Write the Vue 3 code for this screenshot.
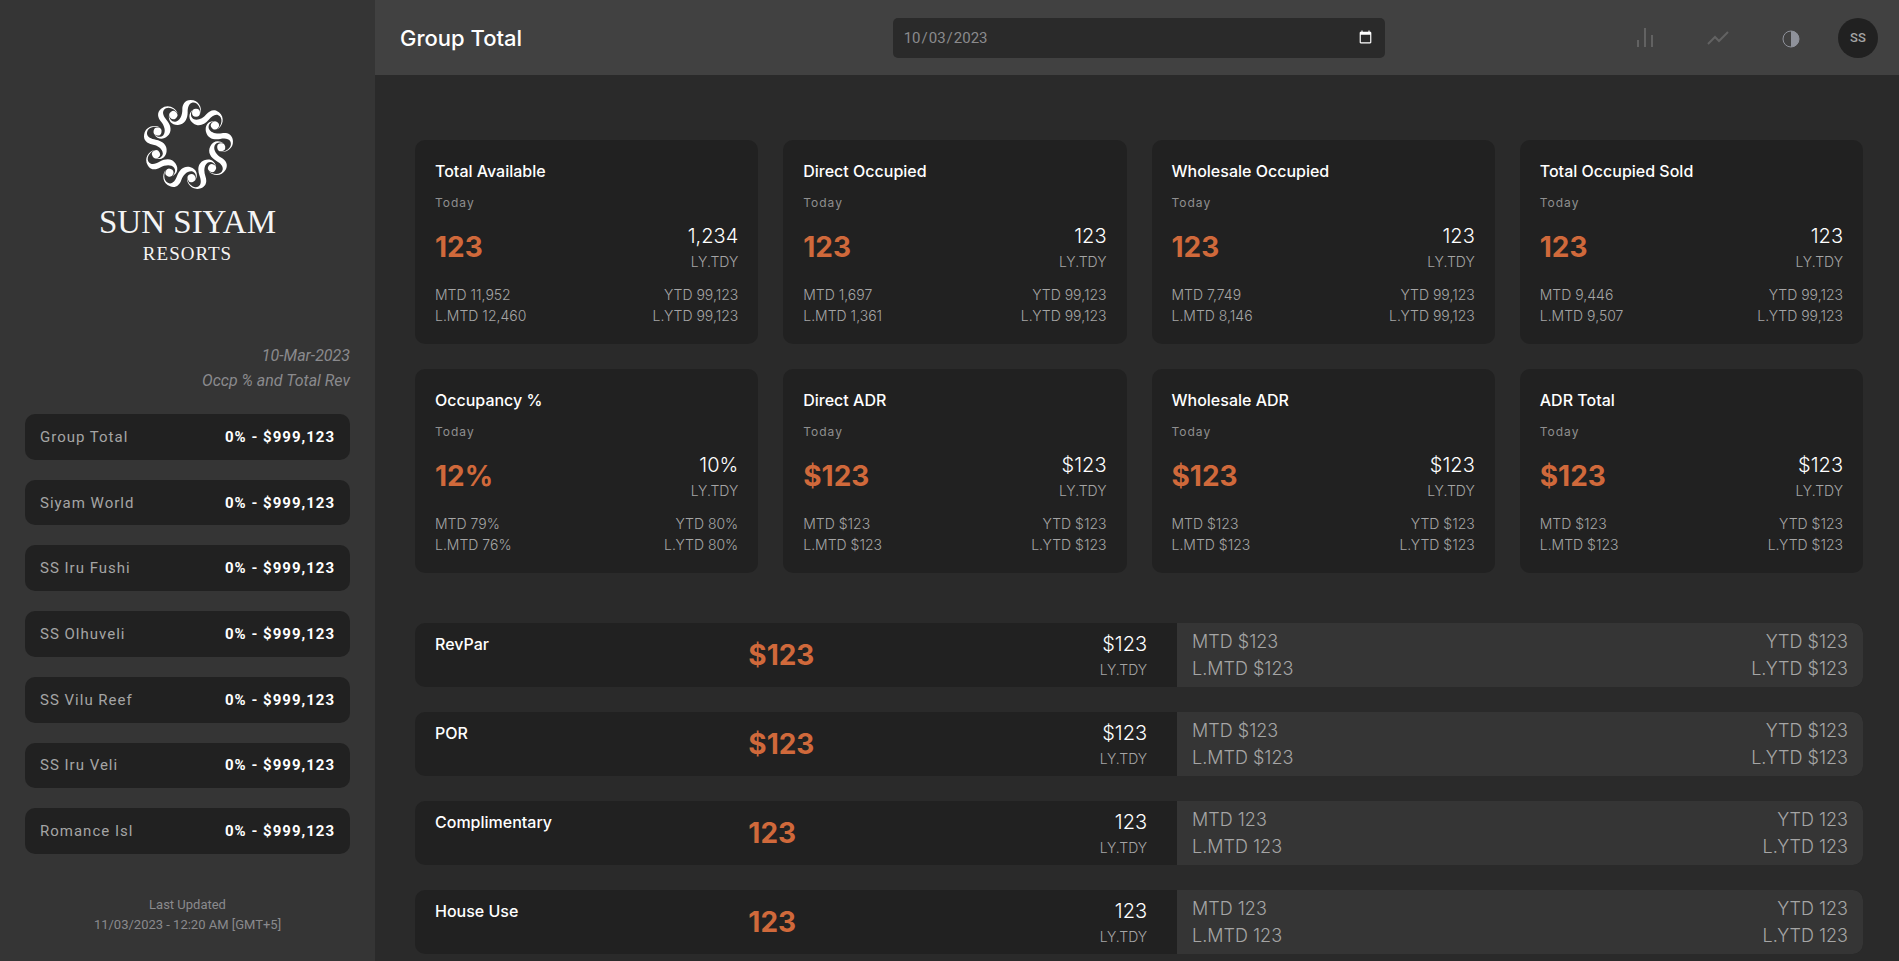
<script setup>
import { ref } from 'vue'

const reportDate = ref('2023-10-03')
const selected = ref('Group Total')

const resorts = [
  'Group Total',
  'Siyam World',
  'SS Iru Fushi',
  'SS Olhuveli',
  'SS Vilu Reef',
  'SS Iru Veli',
  'Romance Isl'
]

const cards = [
  { title: 'Total Available', today: '123', lastYear: '1,234', mtd: '11,952', lmtd: '12,460', ytd: '99,123', lytd: '99,123' },
  { title: 'Direct Occupied', today: '123', lastYear: '123', mtd: '1,697', lmtd: '1,361', ytd: '99,123', lytd: '99,123' },
  { title: 'Wholesale Occupied', today: '123', lastYear: '123', mtd: '7,749', lmtd: '8,146', ytd: '99,123', lytd: '99,123' },
  { title: 'Total Occupied Sold', today: '123', lastYear: '123', mtd: '9,446', lmtd: '9,507', ytd: '99,123', lytd: '99,123' },
  { title: 'Occupancy %', today: '12%', lastYear: '10%', mtd: '79%', lmtd: '76%', ytd: '80%', lytd: '80%' },
  { title: 'Direct ADR', today: '$123', lastYear: '$123', mtd: '$123', lmtd: '$123', ytd: '$123', lytd: '$123' },
  { title: 'Wholesale ADR', today: '$123', lastYear: '$123', mtd: '$123', lmtd: '$123', ytd: '$123', lytd: '$123' },
  { title: 'ADR Total', today: '$123', lastYear: '$123', mtd: '$123', lmtd: '$123', ytd: '$123', lytd: '$123' }
]

const strips = [
  { title: 'RevPar', value: '$123' },
  { title: 'POR', value: '$123' },
  { title: 'Complimentary', value: '123' },
  { title: 'House Use', value: '123' }
]
</script>

<template>
  <div class="layout">
    <aside class="sidebar">
      <div class="logo">
        <svg class="logo-mark" viewBox="-135 -135 270 270" aria-hidden="true">
          <g v-for="n in 9" :key="n" :transform="`rotate(${(n - 1) * 40})`">
            <path d="M37 -92C44 -112 32 -135 8 -135C-10 -135 -17 -121 -17 -106C-17 -90 -24 -73 -38 -70C-49 -69 -56 -78 -57 -90C-60 -72 -48 -59 -30 -60C-10 -61 -1 -78 -1 -98C-1 -112 2 -124 12 -127C28 -131 40 -112 37 -92Z" />
            <circle cx="24" cy="-97" r="12" />
          </g>
        </svg>
        <div class="logo-name">SUN SIYAM</div>
        <div class="logo-sub">RESORTS</div>
      </div>

      <div class="caption">
        10-Mar-2023<br />
        Occp % and Total Rev
      </div>

      <nav class="resorts">
        <button
            v-for="resort in resorts"
            :key="resort"
            type="button"
            class="resort"
            @click="selected = resort"
        >
          <span>{{ resort }}</span>
          <strong>0% - $999,123</strong>
        </button>
      </nav>

      <div class="updated">
        Last Updated<br />
        11/03/2023 - 12:20 AM [GMT+5]
      </div>
    </aside>

    <div class="page">
      <header class="topbar">
        <h1>{{ selected }}</h1>
        <input v-model="reportDate" class="date" type="date" aria-label="Report date" />
        <div class="actions">
          <button type="button" class="icon-btn" aria-label="Bar chart">
            <svg class="dim" width="24" height="24" viewBox="0 0 24 24">
              <path d="M5 14v7M12 2v19M19 9v12" />
            </svg>
          </button>
          <button type="button" class="icon-btn" aria-label="Trend">
            <svg class="dim" width="24" height="24" viewBox="0 0 24 24">
              <path d="M2 18l7-7 4 4 9-9" />
            </svg>
          </button>
          <button type="button" class="icon-btn" aria-label="Theme">
            <svg width="24" height="24" viewBox="0 0 24 24">
              <circle class="ring" cx="12" cy="13" r="8" />
              <path class="half" d="M12 5a8 8 0 0 1 0 16z" />
            </svg>
          </button>
          <button type="button" class="avatar">SS</button>
        </div>
      </header>

      <main class="content">
        <section class="cards">
          <article v-for="card in cards" :key="card.title" class="card">
            <h2>{{ card.title }}</h2>
            <div class="today">Today</div>
            <div class="figures">
              <div class="value">{{ card.today }}</div>
              <div class="last-year">
                <div class="amount">{{ card.lastYear }}</div>
                <div class="label">LY.TDY</div>
              </div>
            </div>
            <div class="totals">
              <div>MTD {{ card.mtd }}<br />L.MTD {{ card.lmtd }}</div>
              <div class="right">YTD {{ card.ytd }}<br />L.YTD {{ card.lytd }}</div>
            </div>
          </article>
        </section>

        <section class="strips">
          <article v-for="strip in strips" :key="strip.title" class="strip">
            <div class="strip-main">
              <h2>{{ strip.title }}</h2>
              <div class="value">{{ strip.value }}</div>
              <div class="last-year">
                <div class="amount">{{ strip.value }}</div>
                <div class="label">LY.TDY</div>
              </div>
            </div>
            <div class="strip-totals">
              <div>MTD {{ strip.value }}<br />L.MTD {{ strip.value }}</div>
              <div class="right">YTD {{ strip.value }}<br />L.YTD {{ strip.value }}</div>
            </div>
          </article>
        </section>
      </main>
    </div>
  </div>
</template>

<style>
body {
  background: #2a2a2a;
}
</style>

<style scoped>
.layout {
  display: flex;
  min-height: 100vh;
  font-family: Inter, sans-serif;
  color: #fff;
}

.layout * {
  box-sizing: border-box;
}

button {
  border: none;
  padding: 0;
  background: none;
  font-family: Roboto, sans-serif;
  cursor: pointer;
}

.sidebar {
  width: 375px;
  flex-shrink: 0;
  display: flex;
  flex-direction: column;
  padding: 100px 25px 26px;
  background: #353535;
  font-family: Roboto, sans-serif;
}

.logo {
  text-align: center;
  font-family: "Liberation Serif", serif;
  color: #f4f4f4;
}

.logo-mark {
  display: block;
  width: 90px;
  height: 90px;
  margin: 0 auto 14px;
  fill: #fff;
}

.logo-name {
  font-size: 33px;
  line-height: 36px;
}

.logo-sub {
  margin-top: 2px;
  font-size: 19px;
  line-height: 24px;
  letter-spacing: 1px;
}

.caption {
  margin: 77px 0 21px;
  text-align: right;
  font-size: 16px;
  font-style: italic;
  line-height: 25px;
  color: #8a8a8d;
}

.resorts {
  flex: 1;
  display: flex;
  flex-direction: column;
  gap: 20px;
}

.resort {
  flex: 1;
  display: flex;
  align-items: center;
  justify-content: space-between;
  min-height: 44px;
  padding: 0 15px;
  border-radius: 10px;
  background: #212121;
  font-size: 15px;
  letter-spacing: 1px;
  color: #a5a5a5;
}

.resort strong {
  font-weight: 700;
  color: #fff;
}

.updated {
  margin-top: 41px;
  text-align: center;
  font-size: 13px;
  line-height: 20px;
  color: #8a8a8d;
}

.page {
  flex: 1;
  min-width: 0;
}

.topbar {
  display: grid;
  grid-template-columns: repeat(3, 1fr);
  align-items: center;
  height: 75px;
  padding: 0 21px 0 25px;
  background: #414141;
}

h1 {
  margin: 0;
  font-size: 22px;
  font-weight: 500;
}

.date {
  width: 100%;
  height: 40px;
  padding: 0 10px;
  border: none;
  border-radius: 5px;
  background: #2a2a2a;
  font-family: Roboto, sans-serif;
  font-size: 15px;
  color: #8a8a8d;
  color-scheme: dark;
}

.actions {
  display: flex;
  align-items: center;
  justify-content: flex-end;
  gap: 49px;
}

.icon-btn {
  width: 24px;
  height: 24px;
}

.icon-btn svg {
  display: block;
  fill: none;
}

.dim {
  stroke: #626262;
  stroke-width: 2;
}

.ring {
  stroke: #8f929b;
  stroke-width: 1;
}

.icon-btn .half {
  fill: #8f929b;
}

.avatar {
  width: 40px;
  height: 40px;
  margin-left: -14px;
  border-radius: 50%;
  background: #212121;
  font-size: 13px;
  font-weight: 500;
  color: #a5a5a5;
}

.content {
  padding: 65px 36px 6px 40px;
}

.cards {
  display: grid;
  grid-template-columns: repeat(4, 1fr);
  gap: 25px;
}

.card {
  padding: 20px 20px 18px;
  border-radius: 10px;
  background: #212121;
}

h2 {
  margin: 0;
  font-size: 16px;
  font-weight: 500;
  line-height: 23px;
}

.today {
  margin: 10px 0;
  font-size: 12px;
  line-height: 20px;
  letter-spacing: 1px;
  color: #8f8f8f;
}

.figures,
.totals,
.strip-totals {
  display: flex;
  justify-content: space-between;
}

.value {
  font-size: 28px;
  font-weight: 700;
  line-height: 48px;
  color: #d0693b;
}

.last-year,
.right {
  text-align: right;
}

.amount {
  font-size: 20px;
  font-weight: 300;
  line-height: 27px;
}

.label {
  font-size: 14px;
  font-weight: 300;
  line-height: 24px;
  color: #a5a5a5;
}

.totals {
  margin-top: 10px;
  font-size: 14px;
  font-weight: 300;
  line-height: 21px;
  color: #a5a5a5;
}

.strips {
  display: grid;
  gap: 25px;
  margin-top: 50px;
}

.strip {
  display: grid;
  grid-template-columns: 10fr 9fr;
  border-radius: 10px;
  overflow: hidden;
  background: #212121;
}

.strip-main {
  display: grid;
  grid-template-columns: 44% 1fr auto;
  padding: 8px 30px 5px 20px;
}

.strip-main h2 {
  line-height: 27px;
}

.strip-totals {
  padding: 5px 15px;
  background: #353535;
  font-size: 18px;
  font-weight: 300;
  line-height: 27px;
  color: #a5a5a5;
}
</style>
